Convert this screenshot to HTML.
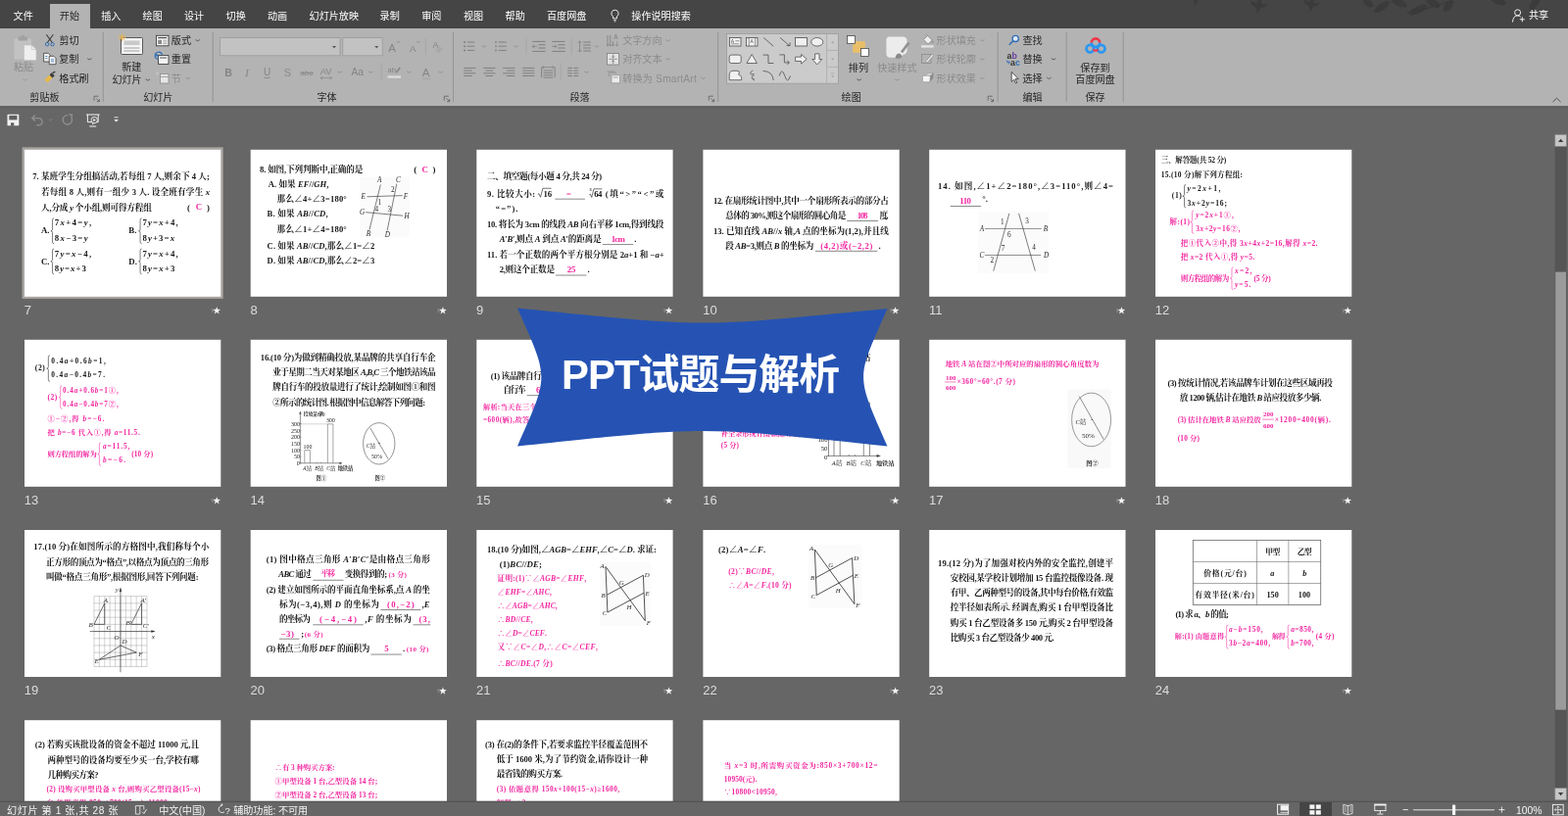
<!DOCTYPE html><html><head><meta charset="utf-8"><title>PPT</title><style>html,body{margin:0;padding:0;background:#666;overflow:hidden;font-family:"Liberation Sans",sans-serif}svg{display:block}.t{font-family:"Liberation Serif","Noto Serif CJK SC",serif;font-weight:bold;fill:#161616}.p{font-family:"Liberation Serif","Noto Serif CJK SC",serif;font-weight:bold;fill:#f3259f}.d{font-family:"Liberation Serif","Noto Serif CJK SC",serif;fill:#2a2a2a}.c{font-family:"Liberation Serif","Noto Serif CJK SC",serif;fill:#202020}.u{font-family:"Liberation Sans","Noto Sans CJK SC",sans-serif}.sf{font-family:"Liberation Serif",serif}.i{font-style:italic}</style></head><body><svg width="1600" height="833" viewBox="0 0 1600 833"><defs><filter id="bl" filterUnits="userSpaceOnUse" x="-20" y="-20" width="1640" height="873"><feGaussianBlur stdDeviation="0.4"/></filter></defs><g filter="url(#bl)"><rect x="-20" y="-20" width="1640" height="873" fill="#666666"/><rect x="22.6" y="150.3" width="205.1" height="154.6" fill="#a9a6a2"/><rect x="25" y="152.8" width="200.3" height="150" fill="#ffffff"/><text class="u" x="24.8" y="321.12" font-size="13" fill="#dcdcdc">7</text><path d="M221.2 313.2L222.17 315.87L225 315.96L222.77 317.71L223.55 320.44L221.2 318.85L218.85 320.44L219.63 317.71L217.4 315.96L220.23 315.87z" fill="#f2f2f2"/><path d="M215.6 316h2.2M216 318h1.8" fill="none" stroke="#b8b8b8" stroke-width="0.6"/><rect x="255.7" y="152.8" width="200.3" height="150" fill="#ffffff"/><text class="u" x="255.5" y="321.12" font-size="13" fill="#dcdcdc">8</text><path d="M451.9 313.2L452.87 315.87L455.7 315.96L453.47 317.71L454.25 320.44L451.9 318.85L449.55 320.44L450.33 317.71L448.1 315.96L450.93 315.87z" fill="#f2f2f2"/><path d="M446.3 316h2.2M446.7 318h1.8" fill="none" stroke="#b8b8b8" stroke-width="0.6"/><rect x="486.3" y="152.8" width="200.3" height="150" fill="#ffffff"/><text class="u" x="486.1" y="321.12" font-size="13" fill="#dcdcdc">9</text><path d="M682.5 313.2L683.47 315.87L686.3 315.96L684.07 317.71L684.85 320.44L682.5 318.85L680.15 320.44L680.93 317.71L678.7 315.96L681.53 315.87z" fill="#f2f2f2"/><path d="M676.9 316h2.2M677.3 318h1.8" fill="none" stroke="#b8b8b8" stroke-width="0.6"/><rect x="717.4" y="152.8" width="200.3" height="150" fill="#ffffff"/><text class="u" x="717.2" y="321.12" font-size="13" fill="#dcdcdc">10</text><path d="M913.6 313.2L914.57 315.87L917.4 315.96L915.17 317.71L915.95 320.44L913.6 318.85L911.25 320.44L912.03 317.71L909.8 315.96L912.63 315.87z" fill="#f2f2f2"/><path d="M908 316h2.2M908.4 318h1.8" fill="none" stroke="#b8b8b8" stroke-width="0.6"/><rect x="948.2" y="152.8" width="200.3" height="150" fill="#ffffff"/><text class="u" x="948" y="321.12" font-size="13" fill="#dcdcdc">11</text><path d="M1144.4 313.2L1145.37 315.87L1148.2 315.96L1145.97 317.71L1146.75 320.44L1144.4 318.85L1142.05 320.44L1142.83 317.71L1140.6 315.96L1143.43 315.87z" fill="#f2f2f2"/><path d="M1138.8 316h2.2M1139.2 318h1.8" fill="none" stroke="#b8b8b8" stroke-width="0.6"/><rect x="1179" y="152.8" width="200.3" height="150" fill="#ffffff"/><text class="u" x="1178.8" y="321.12" font-size="13" fill="#dcdcdc">12</text><path d="M1375.2 313.2L1376.17 315.87L1379 315.96L1376.77 317.71L1377.55 320.44L1375.2 318.85L1372.85 320.44L1373.63 317.71L1371.4 315.96L1374.23 315.87z" fill="#f2f2f2"/><path d="M1369.6 316h2.2M1370 318h1.8" fill="none" stroke="#b8b8b8" stroke-width="0.6"/><rect x="25" y="346.8" width="200.3" height="150" fill="#ffffff"/><text class="u" x="24.8" y="515.12" font-size="13" fill="#dcdcdc">13</text><path d="M221.2 507.2L222.17 509.87L225 509.96L222.77 511.71L223.55 514.44L221.2 512.85L218.85 514.44L219.63 511.71L217.4 509.96L220.23 509.87z" fill="#f2f2f2"/><path d="M215.6 510h2.2M216 512h1.8" fill="none" stroke="#b8b8b8" stroke-width="0.6"/><rect x="255.7" y="346.8" width="200.3" height="150" fill="#ffffff"/><text class="u" x="255.5" y="515.12" font-size="13" fill="#dcdcdc">14</text><rect x="486.3" y="346.8" width="200.3" height="150" fill="#ffffff"/><text class="u" x="486.1" y="515.12" font-size="13" fill="#dcdcdc">15</text><path d="M682.5 507.2L683.47 509.87L686.3 509.96L684.07 511.71L684.85 514.44L682.5 512.85L680.15 514.44L680.93 511.71L678.7 509.96L681.53 509.87z" fill="#f2f2f2"/><path d="M676.9 510h2.2M677.3 512h1.8" fill="none" stroke="#b8b8b8" stroke-width="0.6"/><rect x="717.4" y="346.8" width="200.3" height="150" fill="#ffffff"/><text class="u" x="717.2" y="515.12" font-size="13" fill="#dcdcdc">16</text><path d="M913.6 507.2L914.57 509.87L917.4 509.96L915.17 511.71L915.95 514.44L913.6 512.85L911.25 514.44L912.03 511.71L909.8 509.96L912.63 509.87z" fill="#f2f2f2"/><path d="M908 510h2.2M908.4 512h1.8" fill="none" stroke="#b8b8b8" stroke-width="0.6"/><rect x="948.2" y="346.8" width="200.3" height="150" fill="#ffffff"/><text class="u" x="948" y="515.12" font-size="13" fill="#dcdcdc">17</text><path d="M1144.4 507.2L1145.37 509.87L1148.2 509.96L1145.97 511.71L1146.75 514.44L1144.4 512.85L1142.05 514.44L1142.83 511.71L1140.6 509.96L1143.43 509.87z" fill="#f2f2f2"/><path d="M1138.8 510h2.2M1139.2 512h1.8" fill="none" stroke="#b8b8b8" stroke-width="0.6"/><rect x="1179" y="346.8" width="200.3" height="150" fill="#ffffff"/><text class="u" x="1178.8" y="515.12" font-size="13" fill="#dcdcdc">18</text><path d="M1375.2 507.2L1376.17 509.87L1379 509.96L1376.77 511.71L1377.55 514.44L1375.2 512.85L1372.85 514.44L1373.63 511.71L1371.4 509.96L1374.23 509.87z" fill="#f2f2f2"/><path d="M1369.6 510h2.2M1370 512h1.8" fill="none" stroke="#b8b8b8" stroke-width="0.6"/><rect x="25" y="541" width="200.3" height="150" fill="#ffffff"/><text class="u" x="24.8" y="709.33" font-size="13" fill="#dcdcdc">19</text><rect x="255.7" y="541" width="200.3" height="150" fill="#ffffff"/><text class="u" x="255.5" y="709.33" font-size="13" fill="#dcdcdc">20</text><path d="M451.9 701.4L452.87 704.07L455.7 704.16L453.47 705.91L454.25 708.64L451.9 707.05L449.55 708.64L450.33 705.91L448.1 704.16L450.93 704.07z" fill="#f2f2f2"/><path d="M446.3 704.2h2.2M446.7 706.2h1.8" fill="none" stroke="#b8b8b8" stroke-width="0.6"/><rect x="486.3" y="541" width="200.3" height="150" fill="#ffffff"/><text class="u" x="486.1" y="709.33" font-size="13" fill="#dcdcdc">21</text><path d="M682.5 701.4L683.47 704.07L686.3 704.16L684.07 705.91L684.85 708.64L682.5 707.05L680.15 708.64L680.93 705.91L678.7 704.16L681.53 704.07z" fill="#f2f2f2"/><path d="M676.9 704.2h2.2M677.3 706.2h1.8" fill="none" stroke="#b8b8b8" stroke-width="0.6"/><rect x="717.4" y="541" width="200.3" height="150" fill="#ffffff"/><text class="u" x="717.2" y="709.33" font-size="13" fill="#dcdcdc">22</text><path d="M913.6 701.4L914.57 704.07L917.4 704.16L915.17 705.91L915.95 708.64L913.6 707.05L911.25 708.64L912.03 705.91L909.8 704.16L912.63 704.07z" fill="#f2f2f2"/><path d="M908 704.2h2.2M908.4 706.2h1.8" fill="none" stroke="#b8b8b8" stroke-width="0.6"/><rect x="948.2" y="541" width="200.3" height="150" fill="#ffffff"/><text class="u" x="948" y="709.33" font-size="13" fill="#dcdcdc">23</text><rect x="1179" y="541" width="200.3" height="150" fill="#ffffff"/><text class="u" x="1178.8" y="709.33" font-size="13" fill="#dcdcdc">24</text><path d="M1375.2 701.4L1376.17 704.07L1379 704.16L1376.77 705.91L1377.55 708.64L1375.2 707.05L1372.85 708.64L1373.63 705.91L1371.4 704.16L1374.23 704.07z" fill="#f2f2f2"/><path d="M1369.6 704.2h2.2M1370 706.2h1.8" fill="none" stroke="#b8b8b8" stroke-width="0.6"/><rect x="25" y="735.2" width="200.3" height="82.8" fill="#ffffff"/><rect x="255.7" y="735.2" width="200.3" height="82.8" fill="#ffffff"/><rect x="486.3" y="735.2" width="200.3" height="82.8" fill="#ffffff"/><rect x="717.4" y="735.2" width="200.3" height="82.8" fill="#ffffff"/>
<text class="t" x="33.2" y="183.44" font-size="8.6" textLength="180.6">7. 某班学生分组搞活动,若每组 7 人,则余下 4 人;</text>
<text class="t" x="42.01" y="199.01" font-size="8.6" textLength="172">若每组 8 人,则有一组少 3 人. 设全班有学生 <tspan class="i">x</tspan></text>
<text class="t" x="42.01" y="214.87" font-size="8.6" textLength="112.8">人,分成 <tspan class="i">y</tspan> 个小组,则可得方程组</text>
<text class="t" x="190.95" y="214.87" font-size="8.8">(</text><text class="p" x="199.76" y="214.28" font-size="8.8">C</text><text class="t" x="210.93" y="214.87" font-size="8.8">)</text>
<path d="M55.07 222.84q-1.6 0 -1.6 1.6L53.47 234.17q0 1.4 -1.6 1.6q1.6 0 1.6 1.6L53.47 247.1q0 1.4 1.6 1.6" fill="none" stroke="#161616" stroke-width="0.55"/><path d="M144.67 222.84q-1.6 0 -1.6 1.6L143.07 234.17q0 1.4 -1.6 1.6q1.6 0 1.6 1.6L143.07 247.1q0 1.4 1.6 1.6" fill="none" stroke="#161616" stroke-width="0.55"/><path d="M55.07 253.98q-1.6 0 -1.6 1.6L53.47 265.31q0 1.4 -1.6 1.6q1.6 0 1.6 1.6L53.47 278.24q0 1.4 1.6 1.6" fill="none" stroke="#161616" stroke-width="0.55"/><path d="M144.67 253.98q-1.6 0 -1.6 1.6L143.07 265.31q0 1.4 -1.6 1.6q1.6 0 1.6 1.6L143.07 278.24q0 1.4 1.6 1.6" fill="none" stroke="#161616" stroke-width="0.55"/>
<text class="t" x="42.01" y="238.42" font-size="8.8">A.</text><text class="t" x="131.32" y="238.42" font-size="8.8">B.</text><text class="t" x="42.01" y="269.56" font-size="8.8">C.</text><text class="t" x="131.32" y="269.56" font-size="8.8">D.</text>
<text class="t" x="55.82" y="230.48" font-size="8.8" textLength="37.3">7<tspan class="i">x</tspan>+4=<tspan class="i">y</tspan>,</text>
<text class="t" x="55.82" y="245.76" font-size="8.8" textLength="33.8">8<tspan class="i">x</tspan>−3=<tspan class="i">y</tspan></text>
<text class="t" x="145.42" y="230.48" font-size="8.8" textLength="36.4">7<tspan class="i">y</tspan>=<tspan class="i">x</tspan>+4,</text>
<text class="t" x="145.42" y="245.76" font-size="8.8" textLength="32.7">8<tspan class="i">y</tspan>+3=<tspan class="i">x</tspan></text>
<text class="t" x="55.82" y="261.62" font-size="8.8" textLength="37.3">7<tspan class="i">y</tspan>=<tspan class="i">x</tspan>−4,</text>
<text class="t" x="55.82" y="276.9" font-size="8.8" textLength="32.1">8<tspan class="i">y</tspan>=<tspan class="i">x</tspan>+3</text>
<text class="t" x="145.42" y="261.62" font-size="8.8" textLength="36.4">7<tspan class="i">y</tspan>=<tspan class="i">x</tspan>+4,</text>
<text class="t" x="145.42" y="276.9" font-size="8.8" textLength="33">8<tspan class="i">y</tspan>=<tspan class="i">x</tspan>+3</text>
<text class="t" x="264.98" y="176.09" font-size="8.6" textLength="105.4">8. 如图,下列判断中,正确的是</text>
<text class="t" x="422.15" y="176.09" font-size="8.8">(</text><text class="p" x="430.38" y="175.5" font-size="8.8">C</text><text class="t" x="441.54" y="176.09" font-size="8.8">)</text>
<text class="t" x="273.8" y="191.37" font-size="8.6" textLength="61.7">A. 如果 <tspan class="i">EF</tspan>//<tspan class="i">GH</tspan>,</text>
<text class="t" x="282.61" y="205.76" font-size="8.6" textLength="71.2">那么∠4+∠3=180°</text>
<text class="t" x="272.62" y="221.33" font-size="8.6" textLength="62">B. 如果 <tspan class="i">AB</tspan>//<tspan class="i">CD</tspan>,</text>
<text class="t" x="282.61" y="236.9" font-size="8.6" textLength="71.2">那么∠1+∠4=180°</text>
<text class="t" x="272.62" y="253.94" font-size="8.6" textLength="109.6">C. 如果 <tspan class="i">AB</tspan>//<tspan class="i">CD</tspan>,那么∠1=∠2</text>
<text class="t" x="272.62" y="269.22" font-size="8.6" textLength="109.6">D. 如果 <tspan class="i">AB</tspan>//<tspan class="i">CD</tspan>,那么∠2=∠3</text>
<rect x="367.22" y="180.54" width="50.53" height="61.69" fill="#fbfbfb"/><path d="M374.56 200.81L410.69 199.64" stroke="#2e2e2e" stroke-width="0.62" fill="none"/><path d="M373.09 216.67L411.28 220.2" stroke="#2e2e2e" stroke-width="0.62" fill="none"/><path d="M388.37 188.47L376.91 234.59" stroke="#2e2e2e" stroke-width="0.62" fill="none"/><path d="M404.82 187.59L395.12 235.48" stroke="#2e2e2e" stroke-width="0.62" fill="none"/>
<text class="d i" x="385.01" y="186.44" font-size="7.2">A</text><text class="d i" x="403.91" y="185.85" font-size="7.2">C</text><text class="d i" x="368.56" y="202.89" font-size="7.2">E</text><text class="d i" x="411.75" y="202.6" font-size="7.2">F</text><text class="d i" x="366.99" y="219.34" font-size="7.2">G</text><text class="d i" x="412.53" y="223.46" font-size="7.2">H</text><text class="d i" x="373.85" y="240.5" font-size="7.2">B</text><text class="d i" x="392.84" y="241.67" font-size="7.2">D</text><text class="d" x="398.92" y="196.14" font-size="7.2">2</text><text class="d" x="385.41" y="208.77" font-size="7.2">1</text><text class="d" x="382.47" y="215.82" font-size="7.2">4</text><text class="d" x="395.4" y="215.53" font-size="7.2">3</text>
<text class="t" x="497.03" y="182.55" font-size="8.6" textLength="117.1">二、填空题(每小题 4 分,共 24 分)</text>
<text class="t" x="497.03" y="201.06" font-size="8.6" textLength="49.2">9. 比较大小:</text>
<path d="M548.73 198.46l1.2 -0.8l1.6 3.6l2.4 -9h8.6" fill="none" stroke="#161616" stroke-width="0.6"/><text class="t" x="554.61" y="201.4" font-size="8.8" textLength="8.6">16</text><path d="M566.36 203.16L596.91 203.16" stroke="#161616" stroke-width="0.5" fill="none"/><text class="p" x="578.11" y="200.52" font-size="8.6">=</text><path d="M601.32 198.75l1 -0.7l1.4 3.4l2.2 -8.6h8.4" fill="none" stroke="#161616" stroke-width="0.6"/><text class="t" x="601.61" y="195.23" font-size="4.4">3</text><text class="t" x="606.31" y="201.4" font-size="8.8" textLength="8">64</text>
<text class="t" x="617.77" y="201.06" font-size="8.6" textLength="59.6">(填“&gt;”“&lt;”或</text>
<text class="t" x="505.84" y="215.75" font-size="8.6" textLength="22.6">“=”).</text>
<text class="t" x="497.03" y="231.91" font-size="8.6" textLength="180.4">10. 将长为 3cm 的线段 <tspan class="i">AB</tspan> 向右平移 1cm,得到线段</text>
<text class="t" x="509.66" y="247.18" font-size="8.6" textLength="103.9"><tspan class="i">A</tspan>′<tspan class="i">B</tspan>′,则点 <tspan class="i">A</tspan> 到点 <tspan class="i">A</tspan>′的距离是</text>
<path d="M614.83 249.58L646.26 249.58" stroke="#161616" stroke-width="0.5" fill="none"/><text class="p" x="623.64" y="247.23" font-size="8.8" textLength="14.2">1cm</text><text class="t" x="647.14" y="247.18" font-size="8.8">.</text>
<text class="t" x="497.03" y="263.05" font-size="8.6" textLength="180.7">11. 若一个正数的两个平方根分别是 2<tspan class="i">a</tspan>+1 和 −<tspan class="i">a</tspan>+</text>
<text class="t" x="509.66" y="278.32" font-size="8.6" textLength="56.4">2,则这个正数是</text>
<path d="M566.94 281.01L598.38 281.01" stroke="#161616" stroke-width="0.5" fill="none"/><text class="p" x="578.7" y="278.37" font-size="8.8">25</text><text class="t" x="599.55" y="278.32" font-size="8.8">.</text>
<text class="t" x="727.93" y="207.53" font-size="8.6" textLength="178.9">12. 在扇形统计图中,其中一个扇形所表示的部分占</text>
<text class="t" x="740.27" y="222.8" font-size="8.6" textLength="123">总体的 30%,则这个扇形的圆心角是</text>
<path d="M864.24 225.49L895.97 225.49" stroke="#161616" stroke-width="0.5" fill="none"/><text class="p" x="874.82" y="222.84" font-size="8.8" textLength="10.6">108</text><text class="t" x="897.44" y="222.8" font-size="8.6" textLength="9.3">度.</text>
<text class="t" x="727.93" y="238.66" font-size="8.6" textLength="178.9">13. 已知直线 <tspan class="i">AB</tspan>//<tspan class="i">x</tspan> 轴,<tspan class="i">A</tspan> 点的坐标为(1,2),并且线</text>
<text class="t" x="740.27" y="253.94" font-size="8.6" textLength="90.1">段 <tspan class="i">AB</tspan>=3,则点 <tspan class="i">B</tspan> 的坐标为</text>
<path d="M831.93 256.33L895.38 256.33" stroke="#161616" stroke-width="0.5" fill="none"/><text class="p" x="837.22" y="253.94" font-size="8.6" textLength="53.1">(4,2)或(−2,2)</text><text class="t" x="896.56" y="253.94" font-size="8.8">.</text>
<text class="t" x="957.03" y="193.13" font-size="8.6" textLength="178.9">14. 如图,∠1+∠2=180°,∠3=110°,则∠4=</text>
<path d="M969.66 210.51L1001.09 210.51" stroke="#161616" stroke-width="0.5" fill="none"/><text class="p" x="979.35" y="208.16" font-size="8.8" textLength="11.5">110</text><text class="t" x="1002.27" y="205.76" font-size="8.8">°.</text>
<rect x="998.16" y="216.38" width="72.27" height="62.28" fill="#fbfbfb"/><path d="M1004.91 233.42L1062.78 233.42" stroke="#8f8f8f" stroke-width="1" fill="none"/><path d="M1004.91 260.45L1062.2 260.45" stroke="#8f8f8f" stroke-width="1" fill="none"/><path d="M1029.88 217.85L1013.73 276.6" stroke="#2e2e2e" stroke-width="0.62" fill="none"/><path d="M1039.58 217.85L1056.32 276.6" stroke="#2e2e2e" stroke-width="0.62" fill="none"/>
<text class="d i" x="999.8" y="235.8" font-size="7.2">A</text><text class="d i" x="1064.72" y="235.8" font-size="7.2">B</text><text class="d i" x="999.6" y="263.12" font-size="7.2">C</text><text class="d i" x="1064.91" y="263.12" font-size="7.2">D</text><text class="d" x="1021.05" y="228.74" font-size="7.2">1</text><text class="d" x="1046.31" y="228.16" font-size="7.2">3</text><text class="d" x="1028.1" y="241.96" font-size="7.2">6</text><text class="d" x="1021.64" y="256.36" font-size="7.2">7</text><text class="d" x="1053.36" y="255.48" font-size="7.2">4</text><text class="d" x="1010.47" y="268.11" font-size="7.2">2</text>
<text class="t" x="1184.7" y="165.9" font-size="7.5" textLength="66.6">三、解答题(共 52 分)</text>
<text class="t" x="1184.7" y="180.88" font-size="7.5" textLength="83.3">15.(10 分)解下列方程组:</text>
<text class="t" x="1195.86" y="202.41" font-size="7.6" textLength="9.9">(1)</text>
<path d="M1210.1 188.47q-1.6 0 -1.6 1.6L1208.5 198.62q0 1.4 -1.6 1.6q1.6 0 1.6 1.6L1208.5 210.37q0 1.4 1.6 1.6" fill="none" stroke="#161616" stroke-width="0.55"/>
<text class="t" x="1211.43" y="195.23" font-size="7.6" textLength="34.1"><tspan class="i">y</tspan>=2<tspan class="i">x</tspan>+1,</text>
<text class="t" x="1211.43" y="209.92" font-size="7.6" textLength="40.6">3<tspan class="i">x</tspan>+2<tspan class="i">y</tspan>=16;</text>
<text class="p" x="1193.51" y="229.43" font-size="7.5" textLength="20.5">解:(1)</text>
<path d="M1218.03 214.91q-1.6 0 -1.6 1.6L1216.43 225.06q0 1.4 -1.6 1.6q1.6 0 1.6 1.6L1216.43 236.81q0 1.4 1.6 1.6" fill="none" stroke="#f3259f" stroke-width="0.55"/>
<text class="p" x="1220.25" y="222.26" font-size="7.4" textLength="38.5"><tspan class="i">y</tspan>=2<tspan class="i">x</tspan>+1①,</text>
<text class="p" x="1220.25" y="236.36" font-size="7.4" textLength="45.2">3<tspan class="i">x</tspan>+2<tspan class="i">y</tspan>=16②,</text>
<text class="p" x="1204.68" y="251.09" font-size="7.5" textLength="139.8">把①代入②中,得 3<tspan class="i">x</tspan>+4<tspan class="i">x</tspan>+2=16,解得 <tspan class="i">x</tspan>=2.</text>
<text class="p" x="1204.68" y="265.2" font-size="7.5" textLength="75.5">把 <tspan class="i">x</tspan>=2 代入①,得 <tspan class="i">y</tspan>=5.</text>
<text class="p" x="1204.68" y="286.72" font-size="7.5" textLength="49.6">则方程组的解为</text>
<path d="M1258.57 272.78q-1.6 0 -1.6 1.6L1256.97 282.64q0 1.4 -1.6 1.6q1.6 0 1.6 1.6L1256.97 294.1q0 1.4 1.6 1.6" fill="none" stroke="#f3259f" stroke-width="0.55"/>
<text class="p" x="1259.91" y="278.95" font-size="7.6" textLength="17.4"><tspan class="i">x</tspan>=2,</text>
<text class="p" x="1259.91" y="293.06" font-size="7.6" textLength="16.5"><tspan class="i">y</tspan>=5.</text>
<text class="p" x="1279.59" y="286.72" font-size="7.5" textLength="17.2">(5 分)</text>
<text class="t" x="35.84" y="377.95" font-size="7.6" textLength="9.9">(2)</text>
<path d="M50.95 362.91q-1.6 0 -1.6 1.6L49.35 374.53q0 1.4 -1.6 1.6q1.6 0 1.6 1.6L49.35 387.75q0 1.4 1.6 1.6" fill="none" stroke="#161616" stroke-width="0.55"/>
<text class="t" x="52.29" y="371.43" font-size="7.4" textLength="55.5">0.4<tspan class="i">a</tspan>+0.6<tspan class="i">b</tspan>=1,</text>
<text class="t" x="52.29" y="385.24" font-size="7.4" textLength="54.7">0.4<tspan class="i">a</tspan>−0.4<tspan class="i">b</tspan>=7.</text>
<text class="p" x="48.47" y="407.62" font-size="7.6" textLength="9.9">(2)</text>
<path d="M63.29 393.75q-1.6 0 -1.6 1.6L61.69 403.91q0 1.4 -1.6 1.6q1.6 0 1.6 1.6L61.69 415.66q0 1.4 1.6 1.6" fill="none" stroke="#f3259f" stroke-width="0.55"/>
<text class="p" x="64.04" y="400.8" font-size="7.2" textLength="56.7">0.4<tspan class="i">a</tspan>+0.6<tspan class="i">b</tspan>=1①,</text>
<text class="p" x="64.04" y="414.91" font-size="7.2" textLength="56.7">0.4<tspan class="i">a</tspan>−0.4<tspan class="i">b</tspan>=7②,</text>
<text class="p" x="48.47" y="429.95" font-size="7.3" textLength="57.9">①−②,得 <tspan class="i">b</tspan>=−6.</text>
<text class="p" x="48.47" y="443.76" font-size="7.3" textLength="94.3">把 <tspan class="i">b</tspan>=−6 代入①,得 <tspan class="i">a</tspan>=11.5.</text>
<text class="p" x="48.47" y="466.08" font-size="7.3" textLength="50.3">则方程组的解为</text>
<path d="M102.95 451.92q-1.6 0 -1.6 1.6L101.35 462.07q0 1.4 -1.6 1.6q1.6 0 1.6 1.6L101.35 473.82q0 1.4 1.6 1.6" fill="none" stroke="#f3259f" stroke-width="0.55"/>
<text class="p" x="104.88" y="458.09" font-size="7.4" textLength="27.6"><tspan class="i">a</tspan>=11.5,</text>
<text class="p" x="104.88" y="472.49" font-size="7.4" textLength="23.2"><tspan class="i">b</tspan>=−6.</text>
<text class="p" x="134.25" y="466.08" font-size="7.3" textLength="21.9">(10 分)</text>
<text class="t" x="265.86" y="367.57" font-size="8.6" textLength="178.8">16.(10 分)为做到精确投放,某品牌的共享自行车企</text>
<text class="t" x="278.2" y="382.84" font-size="8.6" textLength="166.5">业于星期二当天对某地区 <tspan class="i">A</tspan>,<tspan class="i">B</tspan>,<tspan class="i">C</tspan> 三个地铁站该品</text>
<text class="t" x="278.2" y="398.12" font-size="8.6" textLength="166.5">牌自行车的投放量进行了统计,绘制如图①和图</text>
<text class="t" x="278.2" y="413.69" font-size="8.6" textLength="155.8">②所示的统计图. 根据图中信息解答下列问题:</text>
<path d="M306.4 420.78L306.4 473.07" stroke="#4a4a4a" stroke-width="0.62" fill="none"/><path d="M305.52 472.78L348.12 472.78" stroke="#4a4a4a" stroke-width="0.62" fill="none"/><path d="M305.52 422.54L306.4 420.19L307.29 422.54z" fill="#4a4a4a" stroke="#4a4a4a" stroke-width="0.4"/><path d="M346.65 471.9L349 472.78L346.65 473.66z" fill="#4a4a4a" stroke="#4a4a4a" stroke-width="0.4"/>
<text class="c" x="297.11" y="434.53" font-size="6">300</text><path d="M306.4 432.53L307.58 432.53" stroke="#4a4a4a" stroke-width="0.4" fill="none"/><text class="c" x="297.11" y="441.58" font-size="6">250</text><path d="M306.4 439.58L307.58 439.58" stroke="#4a4a4a" stroke-width="0.4" fill="none"/><text class="c" x="297.11" y="448.34" font-size="6">200</text><path d="M306.4 446.34L307.58 446.34" stroke="#4a4a4a" stroke-width="0.4" fill="none"/><text class="c" x="297.11" y="455.1" font-size="6">150</text><path d="M306.4 453.1L307.58 453.1" stroke="#4a4a4a" stroke-width="0.4" fill="none"/><text class="c" x="297.11" y="461.56" font-size="6">100</text><path d="M306.4 459.56L307.58 459.56" stroke="#4a4a4a" stroke-width="0.4" fill="none"/><text class="c" x="299.91" y="468.32" font-size="6">50</text><path d="M306.4 466.32L307.58 466.32" stroke="#4a4a4a" stroke-width="0.4" fill="none"/><text class="c" x="302.72" y="475.07" font-size="6">0</text><path d="M306.4 473.07L307.58 473.07" stroke="#4a4a4a" stroke-width="0.4" fill="none"/>
<text class="c" x="309.72" y="424.26" font-size="4.8" font-weight="bold" textLength="21.9">投放量(辆)</text>
<path d="M310.81 472.78L310.81 459.56L316.39 459.56L316.39 472.78" fill="none" stroke="#4a4a4a" stroke-width="0.5"/><path d="M334.31 472.78L334.31 432.83L339.89 432.83L339.89 472.78" fill="none" stroke="#4a4a4a" stroke-width="0.5"/><path d="M306.4 432.83L334.31 432.83" stroke="#4a4a4a" stroke-width="0.4" fill="none" stroke-dasharray="1.2 0.9"/>
<text class="c" x="309.59" y="457.59" font-size="5.8">100</text><text class="c" x="333.09" y="431.44" font-size="5.8">300</text>
<path d="M323.15 471.6L323.15 472.78" stroke="#4a4a4a" stroke-width="0.4" fill="none"/><path d="M327.56 471.6L327.56 472.78" stroke="#4a4a4a" stroke-width="0.4" fill="none"/>
<text class="c" x="309.09" y="480.27" font-size="5.6"><tspan class="i">A</tspan>站</text><text class="c" x="321.14" y="480.27" font-size="5.6"><tspan class="i">B</tspan>站</text><text class="c" x="333.31" y="480.27" font-size="5.6"><tspan class="i">C</tspan>站</text><text class="c" x="344.67" y="480.21" font-size="5.2" font-weight="bold">地铁站</text><text class="c" x="322.52" y="490.2" font-size="5.2" font-weight="bold">图①</text>
<ellipse cx="386.75" cy="452.8" rx="16.16" ry="21.15" fill="none" stroke="#4a4a4a" stroke-width="0.6"/><path d="M377.79 436.94L396 468.37" stroke="#4a4a4a" stroke-width="0.62" fill="none"/><circle cx="386.9" cy="452.51" r="0.8" fill="#4a4a4a"/>
<text class="c" x="373.85" y="456.77" font-size="5.6"><tspan class="i">C</tspan>站</text><text class="c" x="378.99" y="467.64" font-size="6">50%</text><text class="c" x="382.45" y="490.2" font-size="5.2" font-weight="bold">图②</text>
<text class="t" x="500.85" y="386.62" font-size="8.6" textLength="52">(1) 该品牌自行</text>
<text class="t" x="513.48" y="401.31" font-size="8.6" textLength="23.2">自行车</text>
<path d="M537.57 403.7L569.88 403.7" stroke="#161616" stroke-width="0.5" fill="none"/><text class="p" x="546.97" y="401.35" font-size="8.8">600</text>
<text class="p" x="492.91" y="417.58" font-size="7.2" textLength="54.7">解析:当天在三个</text>
<text class="p" x="492.91" y="430.8" font-size="7.2" textLength="47.4">=600(辆),故答</text>
<text class="t" x="728.52" y="367.53" font-size="8.6" textLength="159.9">(2) 请补全条形统计图,求出地铁 <tspan class="i">A</tspan> 站</text>
<text class="p" x="735.86" y="445.19" font-size="7.2" textLength="80.5">补全条形统计图如图所示,</text>
<text class="p" x="735.86" y="456.65" font-size="7.2" textLength="18.1">(5 分)</text>
<path d="M845.44 402.82L845.44 465.69" stroke="#3a3a3a" stroke-width="0.62" fill="none"/><path d="M843.97 465.39L896.56 465.39" stroke="#3a3a3a" stroke-width="0.62" fill="none"/><path d="M894.79 464.22L898.32 465.39L894.79 466.57z" fill="#3a3a3a" stroke="#3a3a3a" stroke-width="0.4"/>
<text class="c" x="834.46" y="413.15" font-size="6.8">300</text><text class="c" x="834.46" y="451.34" font-size="6.8">100</text><text class="c" x="837.73" y="459.71" font-size="6.8">50</text><text class="c" x="841" y="468.67" font-size="6.8">0</text>
<path d="M851.02 465.39L851.02 449.24L857.19 449.24L857.19 465.39" fill="none" stroke="#3a3a3a" stroke-width="0.6"/><path d="M866.21 463.92L866.21 465.39" stroke="#3a3a3a" stroke-width="0.5" fill="none"/><path d="M872.23 463.92L872.23 465.39" stroke="#3a3a3a" stroke-width="0.5" fill="none"/><path d="M881.28 465.39L881.28 411.05L887.45 411.05L887.45 465.39" fill="none" stroke="#3a3a3a" stroke-width="0.6"/>
<text class="c" x="848.76" y="474.98" font-size="6.6"><tspan class="i">A</tspan>站</text><text class="c" x="863.53" y="474.98" font-size="6.6"><tspan class="i">B</tspan>站</text><text class="c" x="878.33" y="474.98" font-size="6.6"><tspan class="i">C</tspan>站</text><text class="c" x="893.93" y="474.92" font-size="6.2" font-weight="bold">地铁站</text>
<text class="p" x="964.67" y="373.53" font-size="7.4" textLength="156.7">地铁 <tspan class="i">A</tspan> 站在图②中所对应的扇形的圆心角度数为</text>
<text class="p" x="964.89" y="387.59" font-size="7">100</text><text class="p" x="964.89" y="397.87" font-size="7">600</text>
<path d="M964.08 389.94L975.53 389.94" stroke="#f3259f" stroke-width="0.6" fill="none"/>
<text class="p" x="976.42" y="392.33" font-size="7.4" textLength="59.6">×360°=60°.(7 分)</text>
<rect x="1089.52" y="397.57" width="44.07" height="80.49" fill="#f9f9f9"/><ellipse cx="1113.61" cy="428.42" rx="19.98" ry="27.32" fill="none" stroke="#4a4a4a" stroke-width="0.55"/><path d="M1101.27 404.62L1126.24 448.69" stroke="#4a4a4a" stroke-width="0.62" fill="none"/><circle cx="1114.2" cy="428.42" r="0.7" fill="#4a4a4a"/>
<text class="d" x="1097.43" y="433.01" font-size="6.6"><tspan class="i">C</tspan>站</text><text class="d" x="1103.91" y="446.53" font-size="7">50%</text><text class="c" x="1108.26" y="475.25" font-size="6.2" font-weight="bold">图②</text>
<text class="t" x="1191.46" y="394.01" font-size="8.6" textLength="168.5">(3) 按统计情况,若该品牌车计划在这些区域再投</text>
<text class="t" x="1203.8" y="409.28" font-size="8.6" textLength="144.5">放 1200 辆,估计在地铁 <tspan class="i">B</tspan> 站应投放多少辆.</text>
<text class="p" x="1201.74" y="430.52" font-size="7.4" textLength="85">(3) 估计在地铁 <tspan class="i">B</tspan> 站应投放</text>
<text class="p" x="1289.07" y="425.19" font-size="7">200</text><text class="p" x="1289.07" y="436.65" font-size="7">600</text>
<path d="M1288.11 428.13L1299.86 428.13" stroke="#f3259f" stroke-width="0.6" fill="none"/>
<text class="p" x="1300.74" y="430.52" font-size="7.4" textLength="57">×1200=400(辆).</text>
<text class="p" x="1201.74" y="449.91" font-size="7.4" textLength="22.2">(10 分)</text>
<text class="t" x="34.37" y="561.1" font-size="8.6" textLength="178.9">17.(10 分)在如图所示的方格图中,我们称每个小</text>
<text class="t" x="47" y="576.96" font-size="8.6" textLength="166.2">正方形的顶点为“格点”,以格点为顶点的三角形</text>
<text class="t" x="47" y="591.94" font-size="8.6" textLength="155.5">叫做“格点三角形”,根据图形,回答下列问题:</text>
<path d="M95.95 608.64L95.95 680.47" stroke="#8e8e8e" stroke-width="0.4" fill="none"/><path d="M101.35 608.64L101.35 680.47" stroke="#8e8e8e" stroke-width="0.4" fill="none"/><path d="M106.75 608.64L106.75 680.47" stroke="#8e8e8e" stroke-width="0.4" fill="none"/><path d="M112.15 608.64L112.15 680.47" stroke="#8e8e8e" stroke-width="0.4" fill="none"/><path d="M117.56 608.64L117.56 680.47" stroke="#8e8e8e" stroke-width="0.4" fill="none"/><path d="M122.96 608.64L122.96 680.47" stroke="#8e8e8e" stroke-width="0.4" fill="none"/><path d="M128.36 608.64L128.36 680.47" stroke="#8e8e8e" stroke-width="0.4" fill="none"/><path d="M133.76 608.64L133.76 680.47" stroke="#8e8e8e" stroke-width="0.4" fill="none"/><path d="M139.17 608.64L139.17 680.47" stroke="#8e8e8e" stroke-width="0.4" fill="none"/><path d="M144.57 608.64L144.57 680.47" stroke="#8e8e8e" stroke-width="0.4" fill="none"/><path d="M149.97 608.64L149.97 680.47" stroke="#8e8e8e" stroke-width="0.4" fill="none"/><path d="M95.95 608.64L149.97 608.64" stroke="#8e8e8e" stroke-width="0.4" fill="none"/><path d="M95.95 615.83L149.97 615.83" stroke="#8e8e8e" stroke-width="0.4" fill="none"/><path d="M95.95 623.01L149.97 623.01" stroke="#8e8e8e" stroke-width="0.4" fill="none"/><path d="M95.95 630.19L149.97 630.19" stroke="#8e8e8e" stroke-width="0.4" fill="none"/><path d="M95.95 637.37L149.97 637.37" stroke="#8e8e8e" stroke-width="0.4" fill="none"/><path d="M95.95 644.56L149.97 644.56" stroke="#8e8e8e" stroke-width="0.4" fill="none"/><path d="M95.95 651.74L149.97 651.74" stroke="#8e8e8e" stroke-width="0.4" fill="none"/><path d="M95.95 658.92L149.97 658.92" stroke="#8e8e8e" stroke-width="0.4" fill="none"/><path d="M95.95 666.1L149.97 666.1" stroke="#8e8e8e" stroke-width="0.4" fill="none"/><path d="M95.95 673.29L149.97 673.29" stroke="#8e8e8e" stroke-width="0.4" fill="none"/><path d="M95.95 680.47L149.97 680.47" stroke="#8e8e8e" stroke-width="0.4" fill="none"/><path d="M122.96 601.09L122.96 686.29" stroke="#2c2c2c" stroke-width="0.6" fill="none"/><path d="M91.66 644.56L157.46 644.56" stroke="#2c2c2c" stroke-width="0.6" fill="none"/><path d="M122.08 604.03L122.96 599.92L123.84 604.03z" fill="#2c2c2c" stroke="#2c2c2c" stroke-width="0.3"/><path d="M154.52 643.53L158.05 644.56L154.52 645.58z" fill="#2c2c2c" stroke="#2c2c2c" stroke-width="0.3"/><path d="M106.75 615.83L95.95 637.37L106.75 637.37z" fill="none" stroke="#2c2c2c" stroke-width="0.7"/><path d="M144.57 615.83L133.76 637.37L144.57 637.37z" fill="none" stroke="#2c2c2c" stroke-width="0.7"/><path d="M122.96 658.92L101.35 673.29L139.17 666.1z" fill="none" stroke="#2c2c2c" stroke-width="0.7"/>
<text class="d i" x="105.7" y="614.86" font-size="7">A</text><text class="d i" x="90.42" y="640.42" font-size="7">B</text><text class="d i" x="108.44" y="643.36" font-size="7">C</text><text class="d" x="143.42" y="614.57" font-size="7"><tspan class="i">A</tspan>′</text><text class="d" x="128.44" y="638.36" font-size="7"><tspan class="i">B</tspan>′</text><text class="d" x="145.87" y="640.71" font-size="7"><tspan class="i">C</tspan>′</text><text class="d i" x="124.41" y="656.87" font-size="7">D</text><text class="d i" x="96.59" y="676.85" font-size="7">E</text><text class="d i" x="141.24" y="669.5" font-size="7">F</text><text class="d i" x="116.48" y="652.76" font-size="7">O</text><text class="d i" x="117.73" y="603.99" font-size="7">y</text><text class="d i" x="154.75" y="651.88" font-size="7">x</text>
<text class="t" x="271.74" y="574.32" font-size="8.6" textLength="167.1">(1) 图中格点三角形 <tspan class="i">A</tspan>′<tspan class="i">B</tspan>′<tspan class="i">C</tspan>′是由格点三角形</text>
<text class="t" x="284.37" y="589.01" font-size="8.6" textLength="33.5"><tspan class="i">ABC</tspan> 通过</text>
<path d="M319.33 592.28L350.47 592.28" stroke="#161616" stroke-width="0.5" fill="none"/><text class="p" x="327.56" y="588.47" font-size="7.8" textLength="14.4">平移</text>
<text class="t" x="351.65" y="589.01" font-size="8.6" textLength="43.4">变换得到的;</text>
<text class="p" x="396.59" y="588.84" font-size="7" textLength="18.2">(3 分)</text>
<text class="t" x="271.74" y="604.87" font-size="8.6" textLength="167.1">(2) 建立如图所示的平面直角坐标系,点 <tspan class="i">A</tspan> 的坐</text>
<text class="t" x="284.96" y="619.85" font-size="8.6" textLength="101.9">标为(−3,4),则 <tspan class="i">D</tspan> 的坐标为</text>
<path d="M388.37 622.54L429.49 622.54" stroke="#161616" stroke-width="0.5" fill="none"/><text class="p" x="395.12" y="619.56" font-size="8.8" textLength="27.5">(0,−2)</text>
<text class="t" x="430.38" y="619.85" font-size="8.8" textLength="8.3">,<tspan class="i">E</tspan></text>
<text class="t" x="284.96" y="635.13" font-size="8.6" textLength="32">的坐标为</text>
<path d="M319.33 637.81L370.74 637.81" stroke="#161616" stroke-width="0.5" fill="none"/><text class="p" x="326.09" y="634.83" font-size="8.8" textLength="37.8">(−4,−4)</text>
<text class="t" x="372.21" y="635.13" font-size="8.6" textLength="47.6">,<tspan class="i">F</tspan> 的坐标为</text>
<path d="M421.56 637.81L439.19 637.81" stroke="#161616" stroke-width="0.5" fill="none"/><text class="p" x="427.44" y="634.83" font-size="8.8" textLength="11.4">(3,</text>
<path d="M284.96 652.21L305.52 652.21" stroke="#161616" stroke-width="0.5" fill="none"/><text class="p" x="286.43" y="649.82" font-size="8.8" textLength="13.4">−3)</text>
<text class="t" x="307.29" y="650.11" font-size="8.8">;</text>
<text class="p" x="310.81" y="650.24" font-size="7" textLength="18.8">(6 分)</text>
<text class="t" x="271.74" y="665.39" font-size="8.6" textLength="105.5">(3) 格点三角形 <tspan class="i">DEF</tspan> 的面积为</text>
<path d="M378.38 668.07L409.81 668.07" stroke="#161616" stroke-width="0.5" fill="none"/><text class="p" x="392.19" y="665.43" font-size="8.8">5</text><text class="t" x="410.99" y="665.39" font-size="8.8">.</text>
<text class="p" x="414.81" y="665.22" font-size="7" textLength="22.6">(10 分)</text>
<text class="t" x="497.03" y="564.04" font-size="8.6" textLength="172.9">18.(10 分)如图,∠<tspan class="i">AGB</tspan>=∠<tspan class="i">EHF</tspan>,∠<tspan class="i">C</tspan>=∠<tspan class="i">D</tspan>. 求证:</text>
<text class="t" x="509.66" y="579.31" font-size="8.8" textLength="43.4">(1)<tspan class="i">BC</tspan>//<tspan class="i">DE</tspan>;</text>
<text class="p" x="507.6" y="593.19" font-size="7.6" textLength="90.5">证明:(1)∵∠<tspan class="i">AGB</tspan>=∠<tspan class="i">EHF</tspan>,</text>
<text class="p" x="507.6" y="606.7" font-size="7.6" textLength="55.3">∠<tspan class="i">EHF</tspan>=∠<tspan class="i">AHC</tspan>,</text>
<text class="p" x="507.6" y="621.1" font-size="7.6" textLength="61.1">∴∠<tspan class="i">AGB</tspan>=∠<tspan class="i">AHC</tspan>,</text>
<text class="p" x="507.6" y="635.2" font-size="7.6" textLength="36.1">∴<tspan class="i">BD</tspan>//<tspan class="i">CE</tspan>,</text>
<text class="p" x="507.6" y="649.01" font-size="7.6" textLength="50.3">∴∠<tspan class="i">D</tspan>=∠<tspan class="i">CEF</tspan>.</text>
<text class="p" x="507.6" y="662.52" font-size="7.6" textLength="102.2">又∵∠<tspan class="i">C</tspan>=∠<tspan class="i">D</tspan>,∴∠<tspan class="i">C</tspan>=∠<tspan class="i">CEF</tspan>,</text>
<text class="p" x="507.6" y="679.85" font-size="7.6" textLength="56.1">∴<tspan class="i">BC</tspan>//<tspan class="i">DE</tspan>.(7 分)</text>
<rect x="611.89" y="573.48" width="52.29" height="65.22" fill="#fbfbfb"/><path d="M617.97 578.47L658.31 633.7" fill="none" stroke="#262626" stroke-width="0.8"/><path d="M617.97 578.47L619.91 625.04" fill="none" stroke="#262626" stroke-width="0.8"/><path d="M619.41 607.26L656.4 587.29" fill="none" stroke="#262626" stroke-width="0.8"/><path d="M619.91 625.04L656.9 605.35" fill="none" stroke="#262626" stroke-width="0.8"/><path d="M656.4 587.29L658.31 633.7" fill="none" stroke="#262626" stroke-width="0.8"/>
<text class="d i" x="612.48" y="580.13" font-size="6.8">A</text><text class="d i" x="659.63" y="637.86" font-size="6.8">F</text><text class="d i" x="613.51" y="609.51" font-size="6.8">B</text><text class="d i" x="614.64" y="628.31" font-size="6.8">C</text><text class="d i" x="657.79" y="589.24" font-size="6.8">D</text><text class="d i" x="658.6" y="608.04" font-size="6.8">E</text><text class="d i" x="631.79" y="596.58" font-size="6.8">G</text><text class="d i" x="639.54" y="622.43" font-size="6.8">H</text>
<text class="t" x="732.93" y="564.04" font-size="8.8" textLength="48.2">(2)∠<tspan class="i">A</tspan>=∠<tspan class="i">F</tspan>.</text>
<text class="p" x="743.21" y="585.84" font-size="7.6" textLength="46.7">(2)∵<tspan class="i">BC</tspan>//<tspan class="i">DE</tspan>,</text>
<text class="p" x="743.21" y="599.95" font-size="7.6" textLength="64.3">∴∠<tspan class="i">A</tspan>=∠<tspan class="i">F</tspan>.(10 分)</text>
<rect x="824.88" y="555.85" width="54.35" height="65.22" fill="#fbfbfb"/><path d="M831.34 560.96L871.88 616.66" fill="none" stroke="#262626" stroke-width="0.8"/><path d="M831.34 560.96L833.25 607.56" fill="none" stroke="#262626" stroke-width="0.8"/><path d="M832.51 589.78L869.53 569.6" fill="none" stroke="#262626" stroke-width="0.8"/><path d="M833.25 607.56L870.24 587.37" fill="none" stroke="#262626" stroke-width="0.8"/><path d="M869.53 569.6L871.88 616.66" fill="none" stroke="#262626" stroke-width="0.8"/>
<text class="d i" x="826.05" y="562.21" font-size="6.8">A</text><text class="d i" x="873.17" y="619.88" font-size="6.8">F</text><text class="d i" x="827.08" y="592.03" font-size="6.8">B</text><text class="d i" x="827.83" y="610.97" font-size="6.8">C</text><text class="d i" x="871.36" y="571.61" font-size="6.8">D</text><text class="d i" x="871.73" y="590.41" font-size="6.8">E</text><text class="d i" x="845.24" y="578.66" font-size="6.8">G</text><text class="d i" x="852.65" y="604.51" font-size="6.8">H</text>
<text class="t" x="957.03" y="577.84" font-size="8.6" textLength="179.2">19.(12 分)为了加强对校内外的安全监控,创建平</text>
<text class="t" x="969.66" y="593.12" font-size="8.6" textLength="166.5">安校园,某学校计划增加 15 台监控摄像设备. 现</text>
<text class="t" x="969.66" y="608.1" font-size="8.6" textLength="166.5">有甲、乙两种型号的设备,其中每台价格,有效监</text>
<text class="t" x="969.66" y="623.38" font-size="8.6" textLength="166.5">控半径如表所示. 经调查,购买 1 台甲型设备比</text>
<text class="t" x="969.66" y="638.65" font-size="8.6" textLength="166.5">购买 1 台乙型设备多 150 元,购买 2 台甲型设备</text>
<text class="t" x="969.66" y="653.64" font-size="8.6" textLength="106">比购买 3 台乙型设备少 400 元.</text>
<rect x="1217.31" y="551.45" width="130.43" height="66.1" fill="none" stroke="#555" stroke-width="0.7"/><path d="M1282.53 551.45L1282.53 617.54" stroke="#555" stroke-width="0.5" fill="none"/><path d="M1314.84 551.45L1314.84 617.54" stroke="#555" stroke-width="0.5" fill="none"/><path d="M1217.31 573.48L1347.74 573.48" stroke="#555" stroke-width="0.5" fill="none"/><path d="M1217.31 595.51L1347.74 595.51" stroke="#555" stroke-width="0.5" fill="none"/>
<text class="t" x="1291.34" y="565.93" font-size="7.8" textLength="15">甲型</text><text class="t" x="1323.65" y="565.93" font-size="7.8" textLength="15">乙型</text>
<text class="t" x="1228.18" y="587.96" font-size="7.8" textLength="43.7">价格(元/台)</text>
<text class="t i" x="1296.33" y="587.96" font-size="8.2">a</text><text class="t i" x="1329.24" y="587.96" font-size="8.2">b</text>
<text class="t" x="1219.37" y="609.99" font-size="7.8" textLength="60.4">有效半径(米/台)</text>
<text class="t" x="1292.51" y="609.99" font-size="8.2">150</text><text class="t" x="1324.83" y="609.99" font-size="8.2">100</text>
<text class="t" x="1199.39" y="630.13" font-size="8.6" textLength="54.6">(1) 求 <tspan class="i">a</tspan>、<tspan class="i">b</tspan> 的值;</text>
<text class="p" x="1198.8" y="652.3" font-size="7.2" textLength="50.3">解:(1) 由题意得</text>
<path d="M1253.28 638.11q-1.6 0 -1.6 1.6L1251.68 648.55q0 1.4 -1.6 1.6q1.6 0 1.6 1.6L1251.68 660.6q0 1.4 1.6 1.6" fill="none" stroke="#f3259f" stroke-width="0.55"/>
<text class="p" x="1254.03" y="645.16" font-size="7.4" textLength="34.7"><tspan class="i">a</tspan>−<tspan class="i">b</tspan>=150,</text>
<text class="p" x="1254.03" y="659.26" font-size="7.4" textLength="42">3<tspan class="i">b</tspan>−2<tspan class="i">a</tspan>=400,</text>
<text class="p" x="1298.1" y="652.3" font-size="7.2" textLength="13.6">解得</text>
<path d="M1315.85 638.11q-1.6 0 -1.6 1.6L1314.25 648.55q0 1.4 -1.6 1.6q1.6 0 1.6 1.6L1314.25 660.6q0 1.4 1.6 1.6" fill="none" stroke="#f3259f" stroke-width="0.55"/>
<text class="p" x="1317.19" y="645.16" font-size="7.4" textLength="23.2"><tspan class="i">a</tspan>=850,</text>
<text class="p" x="1317.19" y="659.26" font-size="7.4" textLength="23.2"><tspan class="i">b</tspan>=700,</text>
<text class="p" x="1342.75" y="652.3" font-size="7.2" textLength="18.7">(4 分)</text>
<text class="t" x="35.84" y="763.44" font-size="8.6" textLength="167.2">(2) 若购买该批设备的资金不超过 11000 元,且</text>
<text class="t" x="48.47" y="779.01" font-size="8.6" textLength="154.5">两种型号的设备均要至少买一台,学校有哪</text>
<text class="t" x="48.47" y="794.28" font-size="8.6" textLength="52.1">几种购买方案?</text>
<text class="p" x="47.59" y="808.47" font-size="7.4" textLength="156.8">(2) 设购买甲型设备 <tspan class="i">x</tspan> 台,则购买乙型设备(15−<tspan class="i">x</tspan>)</text>
<text class="p" x="47.59" y="822.27" font-size="7.4" textLength="125.4">台,依题意得 850<tspan class="i">x</tspan>+700(15−<tspan class="i">x</tspan>)≤11000,</text>
<text class="p" x="280.55" y="785.55" font-size="7.4" textLength="61">∴有 3 种购买方案:</text>
<text class="p" x="280.55" y="799.65" font-size="7.4" textLength="104.6">①甲型设备 1 台,乙型设备 14 台;</text>
<text class="p" x="280.55" y="814.05" font-size="7.4" textLength="104.6">②甲型设备 2 台,乙型设备 13 台;</text>
<text class="t" x="494.97" y="762.55" font-size="8.6" textLength="166.2">(3) 在(2)的条件下,若要求监控半径覆盖范围不</text>
<text class="t" x="506.72" y="777.54" font-size="8.6" textLength="154.5">低于 1600 米,为了节约资金,请你设计一种</text>
<text class="t" x="506.72" y="792.81" font-size="8.6" textLength="67.3">最省钱的购买方案.</text>
<text class="p" x="506.72" y="808.47" font-size="7.4" textLength="125.5">(3) 依题意得 150<tspan class="i">x</tspan>+100(15−<tspan class="i">x</tspan>)≥1600,</text>
<text class="p" x="506.72" y="822.27" font-size="7.4" textLength="32">解得 <tspan class="i">x</tspan>≥2.</text>
<text class="p" x="738.8" y="783.5" font-size="7.4" textLength="156.7">当 <tspan class="i">x</tspan>=3 时,所需购买资金为:850×3+700×12=</text>
<text class="p" x="738.8" y="797.89" font-size="7.4" textLength="33.5">10950(元).</text>
<text class="p" x="738.8" y="811.11" font-size="7.4" textLength="54.1">∵10800&lt;10950,</text>
<path d="M528 314.5C725 334.5 708.5 334.5 905.5 315C873 388.6 873 381.4 905.5 455.5C708.5 434.8 725 434.8 528 455.5C560.5 381.9 560.5 388.1 528 314.5z" fill="#2553b3"/><text class="u" x="573.04" y="396.8" font-size="41.8" font-weight="bold" fill="#ffffff" textLength="284">PPT试题与解析</text><rect x="-20" y="-20" width="1640" height="49" fill="#444444"/><path d="M1284 5m-8-3q4-1 6 2q1-5 6-7q-1 4-1 7q3 1 6 0q-2 4-7 4q-1 4-4 6q1-4 0-6q-4-2-6-6z" fill="#3a3a3a"/><path d="M1338 3.5m-8-3q4-1 6 2q1-5 6-7q-1 4-1 7q3 1 6 0q-2 4-7 4q-1 4-4 6q1-4 0-6q-4-2-6-6z" fill="#3a3a3a"/><path d="M1220 -3m-8-3q4-1 6 2q1-5 6-7q-1 4-1 7q3 1 6 0q-2 4-7 4q-1 4-4 6q1-4 0-6q-4-2-6-6z" fill="#3a3a3a"/><ellipse cx="1410" cy="7" rx="9" ry="3.4" fill="#3a3a3a" transform="rotate(-35 1410 7)"/><ellipse cx="1428" cy="3" rx="8" ry="3.4" fill="#3a3a3a" transform="rotate(25 1428 3)"/><ellipse cx="1447" cy="10" rx="10" ry="3.4" fill="#3a3a3a" transform="rotate(-25 1447 10)"/><ellipse cx="1462" cy="3" rx="8" ry="3.4" fill="#3a3a3a" transform="rotate(30 1462 3)"/><ellipse cx="1478" cy="6" rx="7" ry="3.4" fill="#3a3a3a" transform="rotate(-50 1478 6)"/><ellipse cx="1396" cy="3" rx="6" ry="3.4" fill="#3a3a3a" transform="rotate(40 1396 3)"/><ellipse cx="1529" cy="1" rx="8" ry="3.4" fill="#3a3a3a" transform="rotate(20 1529 1)"/><ellipse cx="1566" cy="3" rx="8" ry="3.4" fill="#3a3a3a" transform="rotate(-55 1566 3)"/><path d="M1436 13q22-4 44-12" fill="none" stroke="#3a3a3a" stroke-width="1.3"/><rect x="-20" y="29" width="1640" height="79.3" fill="#b3b3b3"/><rect x="-20" y="108.3" width="1640" height="1.2" fill="#5c5c5c"/><rect x="-20" y="109.5" width="1640" height="1.5" fill="#626262"/><rect x="51" y="4" width="41" height="26" fill="#b3b3b3"/>
<text class="u" x="13.6" y="20.09" font-size="10.1" fill="#ffffff">文件</text><text class="u" x="103.2" y="20.09" font-size="10.1" fill="#ffffff">插入</text><text class="u" x="145.6" y="20.09" font-size="10.1" fill="#ffffff">绘图</text><text class="u" x="188" y="20.09" font-size="10.1" fill="#ffffff">设计</text><text class="u" x="230.6" y="20.09" font-size="10.1" fill="#ffffff">切换</text><text class="u" x="273" y="20.09" font-size="10.1" fill="#ffffff">动画</text><text class="u" x="315.6" y="20.09" font-size="10.1" fill="#ffffff">幻灯片放映</text><text class="u" x="387.6" y="20.09" font-size="10.1" fill="#ffffff">录制</text><text class="u" x="430.2" y="20.09" font-size="10.1" fill="#ffffff">审阅</text><text class="u" x="473" y="20.09" font-size="10.1" fill="#ffffff">视图</text><text class="u" x="515.6" y="20.09" font-size="10.1" fill="#ffffff">帮助</text><text class="u" x="558" y="20.09" font-size="10.1" fill="#ffffff">百度网盘</text><text class="u" x="644.3" y="20.09" font-size="10.1" fill="#ffffff">操作说明搜索</text><text class="u" x="60.8" y="20.09" font-size="10.1" fill="#262626">开始</text>
<path d="M627.5 10.2a3.6 3.6 0 0 1 2 6.6v2h-4v-2a3.6 3.6 0 0 1 2-6.6z" fill="none" stroke="#ffffff" stroke-width="0.9"/><path d="M626.2 20.5h2.6M626.7 22h1.6" fill="none" stroke="#ffffff" stroke-width="0.8"/><circle cx="1548.6" cy="12.8" r="3" fill="none" stroke="#ffffff" stroke-width="0.9"/><path d="M1543.5 22.5q0.5-6.5 5-6.5q2 0 3.2 1.2" fill="none" stroke="#ffffff" stroke-width="0.9"/><path d="M1553.3 17.3v5M1550.8 19.8h5" fill="none" stroke="#ffffff" stroke-width="0.9"/><text class="u" x="1560" y="19.39" font-size="10.1" fill="#ffffff">共享</text><path d="M105.3 33L105.3 104" stroke="#919191" stroke-width="0.9" fill="none"/><path d="M217.2 33L217.2 104" stroke="#919191" stroke-width="0.9" fill="none"/><path d="M462.5 33L462.5 104" stroke="#919191" stroke-width="0.9" fill="none"/><path d="M732.6 33L732.6 104" stroke="#919191" stroke-width="0.9" fill="none"/><path d="M1018.2 33L1018.2 104" stroke="#919191" stroke-width="0.9" fill="none"/><path d="M1088.2 33L1088.2 104" stroke="#919191" stroke-width="0.9" fill="none"/><path d="M1146.2 33L1146.2 104" stroke="#919191" stroke-width="0.9" fill="none"/>
<text class="u" x="30.35" y="103.19" font-size="10.1" fill="#262626">剪贴板</text><text class="u" x="146.15" y="103.19" font-size="10.1" fill="#262626">幻灯片</text><text class="u" x="323.4" y="103.19" font-size="10.1" fill="#262626">字体</text><text class="u" x="581.4" y="103.19" font-size="10.1" fill="#262626">段落</text><text class="u" x="858.6" y="103.19" font-size="10.1" fill="#262626">绘图</text><text class="u" x="1043.4" y="103.19" font-size="10.1" fill="#262626">编辑</text><text class="u" x="1107.4" y="103.19" font-size="10.1" fill="#262626">保存</text>
<path d="M100.5 98.2h-4.5v4.5" fill="none" stroke="#666" stroke-width="0.9"/><path d="M98.2 100.4l3.2 3.2m0-2.6v2.6h-2.6" fill="none" stroke="#666" stroke-width="0.9"/><path d="M457.8 98.2h-4.5v4.5" fill="none" stroke="#666" stroke-width="0.9"/><path d="M455.5 100.4l3.2 3.2m0-2.6v2.6h-2.6" fill="none" stroke="#666" stroke-width="0.9"/><path d="M727.8 98.2h-4.5v4.5" fill="none" stroke="#666" stroke-width="0.9"/><path d="M725.5 100.4l3.2 3.2m0-2.6v2.6h-2.6" fill="none" stroke="#666" stroke-width="0.9"/><path d="M1012.7 98.2h-4.5v4.5" fill="none" stroke="#666" stroke-width="0.9"/><path d="M1010.4 100.4l3.2 3.2m0-2.6v2.6h-2.6" fill="none" stroke="#666" stroke-width="0.9"/><path d="M1584.5 104l4-3.8l4 3.8" fill="none" stroke="#444" stroke-width="0.9"/><rect x="14.5" y="39.5" width="17.5" height="21" fill="#c2c2c2" rx="1.5"/><rect x="18.5" y="37.5" width="9.5" height="4" fill="#a2a2a2" rx="1"/><rect x="21.5" y="35.8" width="3.5" height="3" fill="#a2a2a2" rx="1"/><path d="M24.5 46h8l4.5 4.5v11h-12.5z" fill="#efefef" stroke="#bdbdbd" stroke-width="0.6"/><path d="M32.5 46v4.5h4.5" fill="none" stroke="#bdbdbd" stroke-width="0.6"/><text class="u" x="14" y="71.79" font-size="10.1" fill="#8b8b8b">粘贴</text><path d="M23.4 80.55l2.2 1.3l2.2 -1.3" fill="none" stroke="#999" stroke-width="0.9"/><path d="M47.3 35.2l6.2 8.6M54.3 35.2l-6.2 8.6" fill="none" stroke="#3b3b3b" stroke-width="1.1"/><circle cx="48.1" cy="45.2" r="1.7" fill="none" stroke="#2f6db5" stroke-width="1"/><circle cx="53.5" cy="45.2" r="1.7" fill="none" stroke="#2f6db5" stroke-width="1"/><text class="u" x="60.5" y="44.99" font-size="10.1" fill="#262626">剪切</text><path d="M44.6 54.3h4.6l2.2 2.2v6.5h-6.8z" fill="#f2f2f2" stroke="#3b3b3b" stroke-width="0.8"/><path d="M50.2 57.3h4.6l2.2 2.2v6.2h-6.8z" fill="#f2f2f2" stroke="#3b3b3b" stroke-width="0.8"/><path d="M46.3 57.5h2M46.3 59.6h2M52 60.8h3M52 62.8h3" fill="none" stroke="#2f6db5" stroke-width="0.8"/><text class="u" x="60.3" y="64.09" font-size="10.1" fill="#262626">复制</text><path d="M89.1 59.65l2.2 1.3l2.2 -1.3" fill="none" stroke="#555" stroke-width="0.9"/><path d="M45.5 81.5l5-5l3 3l-5 5z" fill="#e8b84a"/><path d="M50.5 76.5l2.2-2.2l3 3l-2.2 2.2z" fill="#3b3b3b"/><path d="M53.5 74.8l2.8-1.8" fill="none" stroke="#3b3b3b" stroke-width="1.4"/><text class="u" x="60.3" y="83.59" font-size="10.1" fill="#262626">格式刷</text><rect x="123.5" y="38.5" width="22" height="17" fill="#f4f4f4" stroke="#4a4a4a" stroke-width="0.9" rx="0.8"/><rect x="126.5" y="41.5" width="16" height="4.5" fill="#c9c9c9"/><path d="M126.5 49h16M126.5 52h16" fill="none" stroke="#8a8a8a" stroke-width="0.8"/><path d="M124.6 34.2v8M120.6 38.2h8M121.8 35.4l5.6 5.6M127.4 35.4l-5.6 5.6" fill="none" stroke="#e9b24a" stroke-width="0.9"/><text class="u" x="124.2" y="71.99" font-size="10.1" fill="#262626">新建</text><text class="u" x="114.4" y="84.99" font-size="10.1" fill="#262626">幻灯片</text><path d="M148.6 80.85l2.2 1.3l2.2 -1.3" fill="none" stroke="#555" stroke-width="0.9"/><rect x="159.5" y="36.3" width="12.5" height="10.5" fill="#f4f4f4" stroke="#3f3f3f" stroke-width="0.9"/><path d="M161.2 38.6h9" fill="none" stroke="#3f3f3f" stroke-width="1.1"/><rect x="161.2" y="40.8" width="3.8" height="4.2" fill="#8a8a8a"/><path d="M166.3 41.2h4M166.3 43h4M166.3 44.7h4" fill="none" stroke="#777" stroke-width="0.6"/><text class="u" x="174.8" y="44.99" font-size="10.1" fill="#262626">版式</text><path d="M199.5 40.55l2.2 1.3l2.2 -1.3" fill="none" stroke="#555" stroke-width="0.9"/><rect x="161.5" y="56.6" width="10.5" height="8.8" fill="#f4f4f4" stroke="#3f3f3f" stroke-width="0.9"/><path d="M163.2 59h7" fill="none" stroke="#3f3f3f" stroke-width="0.9"/><path d="M165.3 55.8a3.6 3.6 0 1 0 -3.6 4.6" fill="none" stroke="#2f6db5" stroke-width="1.2"/><path d="M159.2 54.2v3.4h3.4z" fill="#2f6db5"/><text class="u" x="174.8" y="64.09" font-size="10.1" fill="#262626">重置</text><rect x="163.5" y="75.5" width="8.5" height="9.5" fill="#e6e6e6" stroke="#8d8d8d" stroke-width="0.8"/><path d="M163.5 78.4h8.5" fill="none" stroke="#8d8d8d" stroke-width="0.8"/><path d="M160.5 73.2v3.6M158.7 75h3.6" fill="none" stroke="#c9c9c9" stroke-width="0.8"/><text class="u" x="174.8" y="83.59" font-size="10.1" fill="#8b8b8b">节</text><path d="M189.6 79.15l2.2 1.3l2.2 -1.3" fill="none" stroke="#8f8f8f" stroke-width="0.9"/><rect x="224.6" y="38.6" width="122.4" height="18.2" fill="#c2c2c2" stroke="#9a9a9a" stroke-width="0.8"/><rect x="349.8" y="38.6" width="40.4" height="18.2" fill="#c2c2c2" stroke="#9a9a9a" stroke-width="0.8"/><path d="M338.9 46.9h4.2l-2.1 2.4z" fill="#555"/><path d="M382.2 46.9h4.2l-2.1 2.4z" fill="#555"/><text class="u" x="396.2" y="53.01" font-size="11.5" fill="#858585">A</text><path d="M405 43.6l1.5-1.6l1.5 1.6" fill="none" stroke="#858585" stroke-width="0.8"/><text class="u" x="418" y="52.88" font-size="9.8" fill="#858585">A</text><path d="M425.3 42.2l1.5 1.6l1.5-1.6" fill="none" stroke="#858585" stroke-width="0.8"/><path d="M434.3 39.5L434.3 56" stroke="#a2a2a2" stroke-width="0.8" fill="none"/><text class="u" x="441.5" y="48.88" font-size="9" fill="#858585">A</text><path d="M444.5 51.2l4.2-4.2l3.2 3.2l-4.2 4.2z" fill="#a9a9a9"/><text class="u" x="229.2" y="77.57" font-size="10.6" font-weight="bold" fill="#858585">B</text><text class="sf" x="250.2" y="77.5" font-size="10.6" font-style="italic" fill="#858585">I</text><text class="u" x="269" y="76.95" font-size="10" fill="#858585">U</text><path d="M269.2 79.3L275.8 79.3" stroke="#858585" stroke-width="0.8" fill="none"/><text class="u" x="289.8" y="77.57" font-size="10.6" fill="#858585">S</text><text class="u" x="290.6" y="78.37" font-size="10.6" fill="#9d9d9d" opacity="0.6">S</text><text class="u" x="306.6" y="77" font-size="8" fill="#858585">abc</text><path d="M306.4 74.6L320 74.6" stroke="#858585" stroke-width="0.7" fill="none"/><text class="u" x="326.8" y="75.53" font-size="9.4" fill="#858585">AV</text><path d="M327 79.6h11.6m-2-1.6l2 1.6l-2 1.6M329 78l-2 1.6l2 1.6" fill="none" stroke="#858585" stroke-width="0.7"/><path d="M344.3 72.95l2.2 1.3l2.2 -1.3" fill="none" stroke="#8f8f8f" stroke-width="0.9"/><text class="u" x="358.4" y="77.42" font-size="10.2" fill="#858585">Aa</text><path d="M376.1 72.95l2.2 1.3l2.2 -1.3" fill="none" stroke="#8f8f8f" stroke-width="0.9"/><path d="M389.2 64.5L389.2 82" stroke="#a2a2a2" stroke-width="0.8" fill="none"/><text class="u" x="395.6" y="74.25" font-size="7.6" fill="#858585">ab</text><path d="M403.6 73.8l4-5.2l1.2 0.9l-4 5.2z" fill="#858585"/><rect x="395.6" y="77.2" width="13.4" height="2.6" fill="#d9d9d9"/><path d="M415.2 72.95l2.2 1.3l2.2 -1.3" fill="none" stroke="#8f8f8f" stroke-width="0.9"/><text class="u" x="430.8" y="77.55" font-size="11.6" fill="#858585">A</text><rect x="431" y="79.6" width="8.2" height="1.6" fill="#a9a9a9"/><path d="M447.4 72.95l2.2 1.3l2.2 -1.3" fill="none" stroke="#8f8f8f" stroke-width="0.9"/><rect x="473.2" y="42.2" width="1.7" height="1.7" fill="#7d7d7d"/><path d="M476.8 43L484.3 43" stroke="#7d7d7d" stroke-width="0.95" fill="none"/><rect x="473.2" y="46.4" width="1.7" height="1.7" fill="#7d7d7d"/><path d="M476.8 47.2L484.3 47.2" stroke="#7d7d7d" stroke-width="0.95" fill="none"/><rect x="473.2" y="50.6" width="1.7" height="1.7" fill="#7d7d7d"/><path d="M476.8 51.4L484.3 51.4" stroke="#7d7d7d" stroke-width="0.95" fill="none"/><path d="M491.6 46.75l2.2 1.3l2.2 -1.3" fill="none" stroke="#8f8f8f" stroke-width="0.9"/><rect x="505.4" y="42" width="1.2" height="2" fill="#7d7d7d"/><path d="M508.6 43L516.8 43" stroke="#7d7d7d" stroke-width="0.95" fill="none"/><rect x="505.4" y="46.2" width="1.2" height="2" fill="#7d7d7d"/><path d="M508.6 47.2L516.8 47.2" stroke="#7d7d7d" stroke-width="0.95" fill="none"/><rect x="505.4" y="50.4" width="1.2" height="2" fill="#7d7d7d"/><path d="M508.6 51.4L516.8 51.4" stroke="#7d7d7d" stroke-width="0.95" fill="none"/><path d="M524.1 46.75l2.2 1.3l2.2 -1.3" fill="none" stroke="#8f8f8f" stroke-width="0.9"/><path d="M537 39.5L537 56" stroke="#a2a2a2" stroke-width="0.8" fill="none"/><path d="M543.2 42.4L556.6 42.4" stroke="#7d7d7d" stroke-width="0.95" fill="none"/><path d="M543.2 52.4L556.6 52.4" stroke="#7d7d7d" stroke-width="0.95" fill="none"/><path d="M549.4 45.7L556.6 45.7" stroke="#7d7d7d" stroke-width="0.95" fill="none"/><path d="M549.4 49L556.6 49" stroke="#7d7d7d" stroke-width="0.95" fill="none"/><path d="M543.5 47.4h4.4m-2.8-1.8l-1.8 1.8l1.8 1.8" fill="none" stroke="#7d7d7d" stroke-width="0.8"/><path d="M563.2 42.4L576.6 42.4" stroke="#7d7d7d" stroke-width="0.95" fill="none"/><path d="M563.2 52.4L576.6 52.4" stroke="#7d7d7d" stroke-width="0.95" fill="none"/><path d="M569.4 45.7L576.6 45.7" stroke="#7d7d7d" stroke-width="0.95" fill="none"/><path d="M569.4 49L576.6 49" stroke="#7d7d7d" stroke-width="0.95" fill="none"/><path d="M563.2 47.4h4.4m-1.6-1.8l1.8 1.8l-1.8 1.8" fill="none" stroke="#7d7d7d" stroke-width="0.8"/><path d="M583.2 39.5L583.2 56" stroke="#a2a2a2" stroke-width="0.8" fill="none"/><path d="M595.2 43L602.8 43" stroke="#7d7d7d" stroke-width="0.95" fill="none"/><path d="M595.2 46L602.8 46" stroke="#7d7d7d" stroke-width="0.95" fill="none"/><path d="M595.2 49L602.8 49" stroke="#7d7d7d" stroke-width="0.95" fill="none"/><path d="M595.2 52L602.8 52" stroke="#7d7d7d" stroke-width="0.95" fill="none"/><path d="M591.6 42v11m-1.7-9.3l1.7-1.8l1.7 1.8m-3.4 7.6l1.7 1.8l1.7-1.8" fill="none" stroke="#7d7d7d" stroke-width="0.8"/><path d="M606.6 46.75l2.2 1.3l2.2 -1.3" fill="none" stroke="#8f8f8f" stroke-width="0.9"/><path d="M473.2 69.4L485.4 69.4" stroke="#7d7d7d" stroke-width="0.95" fill="none"/><path d="M493.2 69.4L505.4 69.4" stroke="#7d7d7d" stroke-width="0.95" fill="none"/><path d="M513.2 69.4L525.4 69.4" stroke="#7d7d7d" stroke-width="0.95" fill="none"/><path d="M533.2 69.4L545.4 69.4" stroke="#7d7d7d" stroke-width="0.95" fill="none"/><path d="M473.2 72.1L481.8 72.1" stroke="#7d7d7d" stroke-width="0.95" fill="none"/><path d="M495.5 72.1L503.1 72.1" stroke="#7d7d7d" stroke-width="0.95" fill="none"/><path d="M516.8 72.1L525.4 72.1" stroke="#7d7d7d" stroke-width="0.95" fill="none"/><path d="M533.2 72.1L545.4 72.1" stroke="#7d7d7d" stroke-width="0.95" fill="none"/><path d="M473.2 74.8L485.4 74.8" stroke="#7d7d7d" stroke-width="0.95" fill="none"/><path d="M493.2 74.8L505.4 74.8" stroke="#7d7d7d" stroke-width="0.95" fill="none"/><path d="M513.2 74.8L525.4 74.8" stroke="#7d7d7d" stroke-width="0.95" fill="none"/><path d="M533.2 74.8L545.4 74.8" stroke="#7d7d7d" stroke-width="0.95" fill="none"/><path d="M473.2 77.5L481.8 77.5" stroke="#7d7d7d" stroke-width="0.95" fill="none"/><path d="M495.5 77.5L503.1 77.5" stroke="#7d7d7d" stroke-width="0.95" fill="none"/><path d="M516.8 77.5L525.4 77.5" stroke="#7d7d7d" stroke-width="0.95" fill="none"/><path d="M533.2 77.5L545.4 77.5" stroke="#7d7d7d" stroke-width="0.95" fill="none"/><path d="M552.6 68.6v10.4M566.2 68.6v10.4" fill="none" stroke="#7d7d7d" stroke-width="0.9"/><path d="M553.4 68.6h12m-1.8-1.4l1.8 1.4l-1.8 1.4m-8.4-2.8l-1.8 1.4l1.8 1.4" fill="none" stroke="#7d7d7d" stroke-width="0.7"/><path d="M554.6 72L564.2 72" stroke="#7d7d7d" stroke-width="0.9" fill="none"/><path d="M554.6 74.4L564.2 74.4" stroke="#7d7d7d" stroke-width="0.9" fill="none"/><path d="M554.6 76.8L564.2 76.8" stroke="#7d7d7d" stroke-width="0.9" fill="none"/><path d="M554.6 79.2L564.2 79.2" stroke="#7d7d7d" stroke-width="0.9" fill="none"/><path d="M572.2 64.5L572.2 82" stroke="#a2a2a2" stroke-width="0.8" fill="none"/><path d="M579.2 69.4L584 69.4" stroke="#7d7d7d" stroke-width="0.95" fill="none"/><path d="M585.4 69.4L590.2 69.4" stroke="#7d7d7d" stroke-width="0.95" fill="none"/><path d="M579.2 72.1L584 72.1" stroke="#7d7d7d" stroke-width="0.95" fill="none"/><path d="M585.4 72.1L590.2 72.1" stroke="#7d7d7d" stroke-width="0.95" fill="none"/><path d="M579.2 74.8L584 74.8" stroke="#7d7d7d" stroke-width="0.95" fill="none"/><path d="M585.4 74.8L590.2 74.8" stroke="#7d7d7d" stroke-width="0.95" fill="none"/><path d="M579.2 77.5L584 77.5" stroke="#7d7d7d" stroke-width="0.95" fill="none"/><path d="M585.4 77.5L590.2 77.5" stroke="#7d7d7d" stroke-width="0.95" fill="none"/><path d="M596.2 72.95l2.2 1.3l2.2 -1.3" fill="none" stroke="#8f8f8f" stroke-width="0.9"/><path d="M620 36v11M622.8 36v11M625.6 42v5" fill="none" stroke="#7d7d7d" stroke-width="0.8"/><path d="M618.6 45.4l1.4 1.7l1.4-1.7M621.4 45.4l1.4 1.7l1.4-1.7M624.2 45.4l1.4 1.7l1.4-1.7" fill="none" stroke="#7d7d7d" stroke-width="0.6"/><text class="u" x="626.3" y="40.2" font-size="6.4" fill="#7d7d7d">A</text><path d="M629.6 42v5m-1.4-1.6l1.4 1.7l1.4-1.7" fill="none" stroke="#7d7d7d" stroke-width="0.6"/><text class="u" x="635.2" y="44.99" font-size="10.1" fill="#8b8b8b">文字方向</text><path d="M679.6 40.55l2.2 1.3l2.2 -1.3" fill="none" stroke="#8f8f8f" stroke-width="0.9"/><rect x="619.6" y="54.6" width="12" height="11.4" fill="#e4e4e4" stroke="#7d7d7d" stroke-width="0.8"/><path d="M625.6 55.4v3.6m-1.5-1.6l1.5 1.7l1.5-1.7M625.6 65.2v-3.6m-1.5 1.6l1.5-1.7l1.5 1.7M621.4 60.3h8.4" fill="none" stroke="#6f6f6f" stroke-width="0.7"/><text class="u" x="635.2" y="64.09" font-size="10.1" fill="#8b8b8b">对齐文本</text><path d="M679.6 59.65l2.2 1.3l2.2 -1.3" fill="none" stroke="#8f8f8f" stroke-width="0.9"/><path d="M619 72.6h8l2.4 2.2h-8z" fill="#9a9a9a"/><path d="M621.4 75v3.2" fill="none" stroke="#9a9a9a" stroke-width="1.4"/><rect x="624" y="76.8" width="8.4" height="8" fill="#ececec" stroke="#9a9a9a" stroke-width="0.8"/><path d="M625.6 79h5" fill="none" stroke="#9a9a9a" stroke-width="0.8"/><text class="u" x="635.2" y="83.59" font-size="10.1" fill="#8b8b8b" textLength="75.5">转换为 SmartArt</text><path d="M715.2 79.15l2.2 1.3l2.2 -1.3" fill="none" stroke="#8f8f8f" stroke-width="0.9"/><rect x="741.6" y="34.6" width="113.8" height="50.6" fill="#cbcbcb" stroke="#9c9c9c" stroke-width="0.8"/><path d="M843.6 34.6L843.6 85.2" stroke="#a9a9a9" stroke-width="0.8" fill="none"/><path d="M843.6 51.4L855.4 51.4" stroke="#a9a9a9" stroke-width="0.8" fill="none"/><path d="M843.6 68.3L855.4 68.3" stroke="#a9a9a9" stroke-width="0.8" fill="none"/><path d="M848 44l1.6-1.8l1.6 1.8z" fill="#9f9f9f"/><path d="M848 59.4l1.6 1.8l1.6-1.8z" fill="#9f9f9f"/><path d="M847.6 75h4" fill="none" stroke="#9f9f9f" stroke-width="0.7"/><path d="M848 77.2l1.6 1.8l1.6-1.8z" fill="#9f9f9f"/><rect x="744.4" y="38.6" width="11.6" height="8.4" fill="#f0f0f0" stroke="#4f4f4f" stroke-width="0.8"/><text class="u" x="745.8" y="44.07" font-size="5" fill="#4f4f4f">A</text><path d="M750.4 41.8h4M746.2 44.8h8" fill="none" stroke="#4f4f4f" stroke-width="0.6"/><rect x="761.4" y="38.6" width="11.6" height="8.4" fill="#f0f0f0" stroke="#4f4f4f" stroke-width="0.8"/><path d="M764.2 38.6v8.4M770.6 38.6v8.4" fill="none" stroke="#4f4f4f" stroke-width="0.6"/><text class="u" x="765.6" y="43.67" font-size="5" fill="#4f4f4f">A</text><path d="M779.2 38.4L789.2 47.2" stroke="#4f4f4f" stroke-width="0.8" fill="none"/><path d="M796 38.4l10 8.6m-3.4-0.4h3.4v-3.2" fill="none" stroke="#4f4f4f" stroke-width="0.8"/><rect x="811.6" y="38.6" width="12" height="8.4" fill="#f0f0f0" stroke="#4f4f4f" stroke-width="0.8"/><ellipse cx="833.8" cy="42.8" rx="6" ry="4.3" fill="#f0f0f0" stroke="#4f4f4f" stroke-width="0.8"/><rect x="744.2" y="56.1" width="12" height="8.4" fill="#f0f0f0" stroke="#4f4f4f" stroke-width="0.8" rx="2"/><path d="M767.2 55.5l5.2 9h-10.4z" fill="#f0f0f0" stroke="#4f4f4f" stroke-width="0.8"/><path d="M778.6 56.1h5.4v8.4h5.4" fill="none" stroke="#4f4f4f" stroke-width="0.8"/><path d="M795.4 55.9h5v8h5m-2.2-2l2.2 2l-2.2 2" fill="none" stroke="#4f4f4f" stroke-width="0.8"/><path d="M811.6 58.1h6v-2.6l5.6 4.8l-5.6 4.8v-2.6h-6z" fill="#f0f0f0" stroke="#4f4f4f" stroke-width="0.8"/><path d="M831.6 54.9v5.6h-2.8l5 5.4l5-5.4h-2.8v-5.6z" fill="#f0f0f0" stroke="#4f4f4f" stroke-width="0.8"/><path d="M744.2 76.8q0-4.5 4-4.5h4q3 0 2 2.2q-1.6 2 1 2.6q1.6 0.4 1.4 2.4v2.2h-12.4z" fill="#f0f0f0" stroke="#4f4f4f" stroke-width="0.8"/><path d="M768.2 71.8q-4 2.6-1.4 4.6q3-2 2.4 0.4q-3.6 2.2-1.4 3.8q2.2-1 1.4 1.8" fill="none" stroke="#4f4f4f" stroke-width="0.8"/><path d="M778.6 72.4q10 0.4 10.6 9.6" fill="none" stroke="#4f4f4f" stroke-width="0.8"/><path d="M795.2 77.4q2.6-9.2 5.6 0t5.6 0" fill="none" stroke="#4f4f4f" stroke-width="0.8"/><rect x="870.2" y="42.2" width="12.6" height="11.6" fill="#e9c069"/><rect x="864.6" y="36.6" width="8" height="8" fill="#ffffff" stroke="#4a4a4a" stroke-width="0.8"/><rect x="878.6" y="49.4" width="8" height="8" fill="#ffffff" stroke="#4a4a4a" stroke-width="0.8"/><text class="u" x="865.8" y="72.99" font-size="10.1" fill="#262626">排列</text><path d="M874.4 80.75l2.2 1.3l2.2 -1.3" fill="none" stroke="#555" stroke-width="0.9"/><path d="M907 37.4h14q4.6 0 4.6 4.6v8.6q0 4-3.6 5.2l-4.6 3h-8.6q-4.4 0-4.4-4.4v-12.4q0-4.6 2.6-4.6z" fill="#ececec"/><path d="M927.4 43.6l-7.4 9.8" fill="none" stroke="#929292" stroke-width="2.6"/><path d="M913.6 59.4q0.2-4.6 4.6-4.8l2.2 2.4q-0.6 3.8-6.8 2.4z" fill="#8a8a8a"/><text class="u" x="895.2" y="72.99" font-size="10.1" fill="#8b8b8b">快速样式</text><path d="M913.4 80.75l2.2 1.3l2.2 -1.3" fill="none" stroke="#8f8f8f" stroke-width="0.9"/><path d="M942.4 40.4l4.2-4l4.6 4.6l-4.2 4z" fill="#ececec" stroke="#8a8a8a" stroke-width="0.8"/><path d="M946.2 36.4l-1.6-1.6M951.6 41.6q1.2 1.8 0 2.6q-1.2-0.8 0-2.6" fill="none" stroke="#8a8a8a" stroke-width="0.8"/><rect x="940" y="46.2" width="12.6" height="2.4" fill="#e3e3e3"/><text class="u" x="955.6" y="44.99" font-size="10.1" fill="#8b8b8b">形状填充</text><path d="M1000.2 40.55l2.2 1.3l2.2 -1.3" fill="none" stroke="#8f8f8f" stroke-width="0.9"/><rect x="940.4" y="55.4" width="9.6" height="9" fill="none" stroke="#8a8a8a" stroke-width="0.8"/><path d="M945 62.2l6.2-7l1.6 1.4l-6.2 7l-2.2 0.6z" fill="#e8e8e8" stroke="#8a8a8a" stroke-width="0.7"/><text class="u" x="955.6" y="64.09" font-size="10.1" fill="#8b8b8b">形状轮廓</text><path d="M1000.2 59.65l2.2 1.3l2.2 -1.3" fill="none" stroke="#8f8f8f" stroke-width="0.9"/><path d="M942.4 77.6l5-3h5.2l-2.8 3z" fill="#d9d9d9" stroke="#8a8a8a" stroke-width="0.5"/><path d="M941.4 78.6q0-1.4 1.4-1.4h6.6l-0.6 6.6h-6q-1.4 0-1.4-1.4z" fill="#f4f4f4" stroke="#8a8a8a" stroke-width="0.6"/><path d="M949.4 77.2l3-3v5.4l-3.4 4.2z" fill="#8a8a8a"/><text class="u" x="955.6" y="83.59" font-size="10.1" fill="#8b8b8b">形状效果</text><path d="M1000.2 79.15l2.2 1.3l2.2 -1.3" fill="none" stroke="#8f8f8f" stroke-width="0.9"/><circle cx="1036.2" cy="39.4" r="3.1" fill="#dfe9f5" stroke="#2f6db5" stroke-width="1.3"/><path d="M1033.8 41.8l-4 4" fill="none" stroke="#2f6db5" stroke-width="1.6"/><text class="u" x="1043.4" y="44.99" font-size="10.1" fill="#262626">查找</text><text class="u" x="1027.4" y="60.1" font-size="8.8" font-weight="bold" fill="#333">a</text><text class="u" x="1032.4" y="60.1" font-size="8.8" font-weight="bold" fill="#6b3fa0">b</text><text class="u" x="1031" y="66.5" font-size="8.8" font-weight="bold" fill="#333">a</text><text class="u" x="1036" y="66.5" font-size="8.8" font-weight="bold" fill="#2f6db5">c</text><path d="M1027.8 61.4v2.4h2.6m-1.2-1.4l1.4 1.4l-1.4 1.4" fill="none" stroke="#2f6db5" stroke-width="0.9"/><text class="u" x="1043.4" y="64.09" font-size="10.1" fill="#262626">替换</text><path d="M1072.8 59.65l2.2 1.3l2.2 -1.3" fill="none" stroke="#555" stroke-width="0.9"/><path d="M1032.2 73.4v10l2.4-2.2l1.8 3.8l1.4-0.6l-1.8-3.8h3.2z" fill="#f6f6f6" stroke="#333" stroke-width="0.8"/><text class="u" x="1043.4" y="83.59" font-size="10.1" fill="#262626">选择</text><path d="M1068.2 79.15l2.2 1.3l2.2 -1.3" fill="none" stroke="#555" stroke-width="0.9"/><circle cx="1112.3" cy="49.7" r="3.8" fill="none" stroke="#2a97f2" stroke-width="2.7"/><circle cx="1123.7" cy="49.7" r="3.8" fill="none" stroke="#2a97f2" stroke-width="2.7"/><path d="M1113.8 43.6a4.2 4.2 0 0 0 8.4 0" fill="none" stroke="#2a97f2" stroke-width="2.7"/><path d="M1113.8 43.6a4.2 4.2 0 0 1 8.4 0" fill="none" stroke="#f0364a" stroke-width="2.7"/><path d="M1115.4 50.6q2.6 2.4 5.2 0" fill="none" stroke="#f0364a" stroke-width="2"/><text class="u" x="1102.35" y="72.99" font-size="10.1" fill="#262626">保存到</text><text class="u" x="1097.3" y="85.19" font-size="10.1" fill="#262626">百度网盘</text><rect x="7.5" y="116.8" width="11.8" height="11.5" fill="#f2f2f2" rx="0.6"/><rect x="9.3" y="117.9" width="8.2" height="4.5" fill="#606060"/><rect x="11" y="125.3" width="3.3" height="3.2" fill="#606060"/><path d="M33 120.6h6q4 0 4 3.6t-4 3.6h-1.6M35.8 117.6l-3 3l3 3" fill="none" stroke="#8f8f8f" stroke-width="1.4"/><path d="M49.8 121.6l1.8 1.2l1.8 -1.2" fill="none" stroke="#888" stroke-width="0.9"/><path d="M70.4 117l3 0.2l-0.4 3.2M73 120.2a4.7 4.7 0 1 1-4-2.6" fill="none" stroke="#8f8f8f" stroke-width="1.4"/><path d="M88 117h13.6M89.4 117v7.6h10.8v-7.6M94.8 124.6v2.6M91.2 129h7" fill="none" stroke="#f2f2f2" stroke-width="1"/><circle cx="96.2" cy="122.6" r="3.2" fill="#666" stroke="#f2f2f2" stroke-width="0.9"/><path d="M95.2 121l2.6 1.6l-2.6 1.6z" fill="#f2f2f2"/><path d="M116.6 119.8h4" fill="none" stroke="#f2f2f2" stroke-width="0.9"/><path d="M116.4 122h4.4l-2.2 2.4z" fill="#f2f2f2"/><rect x="1586.6" y="137" width="12" height="680" fill="#555555"/><rect x="1586.8" y="137.4" width="11.6" height="12" fill="#c6c6c6" stroke="#8a8a8a" stroke-width="0.6"/><path d="M1590 145l2.6-3.2l2.6 3.2z" fill="#3a3a3a"/><rect x="1587.2" y="277.6" width="10.8" height="447" fill="#9b9b9b"/><rect x="1586.8" y="804.6" width="11.6" height="12" fill="#c6c6c6" stroke="#8a8a8a" stroke-width="0.6"/><path d="M1590 809l2.6 3.2l2.6-3.2z" fill="#3a3a3a"/><rect x="-20" y="818" width="1640" height="35" fill="#666666"/><path d="M-20 818.2L1620 818.2" stroke="#4d4d4d" stroke-width="1" fill="none"/><text class="u" x="7" y="830.99" font-size="10.1" fill="#f4f4f4" textLength="113.6">幻灯片 第 1 张,共 28 张</text><path d="M138.4 822.6h4.4v8.4h-4.4zM142.8 822.6h4v4" fill="none" stroke="#f4f4f4" stroke-width="0.8"/><path d="M145.2 828.8l1.6 1.8l2.8-4.4" fill="none" stroke="#f4f4f4" stroke-width="0.9"/><text class="u" x="162.2" y="830.99" font-size="10.1" fill="#f4f4f4" textLength="47.2">中文(中国)</text><path d="M226.6 822.4a3.6 3.6 0 1 0 2.4 6.4" fill="none" stroke="#f4f4f4" stroke-width="0.9"/><circle cx="226.4" cy="821.4" r="0.9" fill="#f4f4f4"/><text class="u" x="229.4" y="831.4" font-size="9.6" fill="#f4f4f4">?</text><text class="u" x="238.2" y="830.99" font-size="10.1" fill="#f4f4f4" textLength="76">辅助功能: 不可用</text><rect x="1303.6" y="821.2" width="11" height="10" fill="none" stroke="#f4f4f4" stroke-width="1"/><rect x="1306.6" y="822.2" width="7.4" height="5.2" fill="#f4f4f4"/><path d="M1306.6 829.4h7.4" fill="none" stroke="#f4f4f4" stroke-width="0.8"/><rect x="1326.2" y="819" width="32.8" height="34" fill="#444444"/><rect x="1336.4" y="821.4" width="5" height="4.4" fill="#f4f4f4"/><rect x="1342.8" y="821.4" width="5" height="4.4" fill="#f4f4f4"/><rect x="1336.4" y="827.2" width="5" height="4.4" fill="#f4f4f4"/><rect x="1342.8" y="827.2" width="5" height="4.4" fill="#f4f4f4"/><path d="M1375.4 822v9.6M1375.4 822.6l-4.6-1.2v9l4.6 1.2l4.6-1.2v-9z" fill="none" stroke="#f4f4f4" stroke-width="0.8"/><path d="M1372 824h2M1372 826h2M1372 828h2M1377 824h2M1377 826h2M1377 828h2" fill="none" stroke="#f4f4f4" stroke-width="0.6"/><rect x="1402.8" y="821.2" width="11.2" height="6.4" fill="none" stroke="#f4f4f4" stroke-width="0.9"/><rect x="1402.4" y="820.8" width="12" height="1.6" fill="#f4f4f4"/><path d="M1408.4 827.6v3M1405.4 831h6" fill="none" stroke="#f4f4f4" stroke-width="0.9"/><path d="M1431.6 826.6h5.2" fill="none" stroke="#f4f4f4" stroke-width="0.9"/><path d="M1442 826.8L1525 826.8" stroke="#f4f4f4" stroke-width="0.9" fill="none"/><rect x="1482" y="821.6" width="3.2" height="10.4" fill="#f4f4f4"/><path d="M1529.4 826.6h6M1532.4 823.6v6" fill="none" stroke="#f4f4f4" stroke-width="0.9"/><text class="u" x="1547" y="831.1" font-size="10.4" fill="#f4f4f4">100%</text><rect x="1584.4" y="821.4" width="10.8" height="10.4" fill="none" stroke="#f4f4f4" stroke-width="0.9"/><path d="M1589.8 823.2v7M1586.2 826.6h7.2M1588.6 824.4l1.2-1.4l1.2 1.4M1588.6 829l1.2 1.4l1.2-1.4M1587.6 825.4l-1.4 1.2l1.4 1.2M1592 825.4l1.4 1.2l-1.4 1.2" fill="none" stroke="#f4f4f4" stroke-width="0.7"/></g></svg></body></html>
